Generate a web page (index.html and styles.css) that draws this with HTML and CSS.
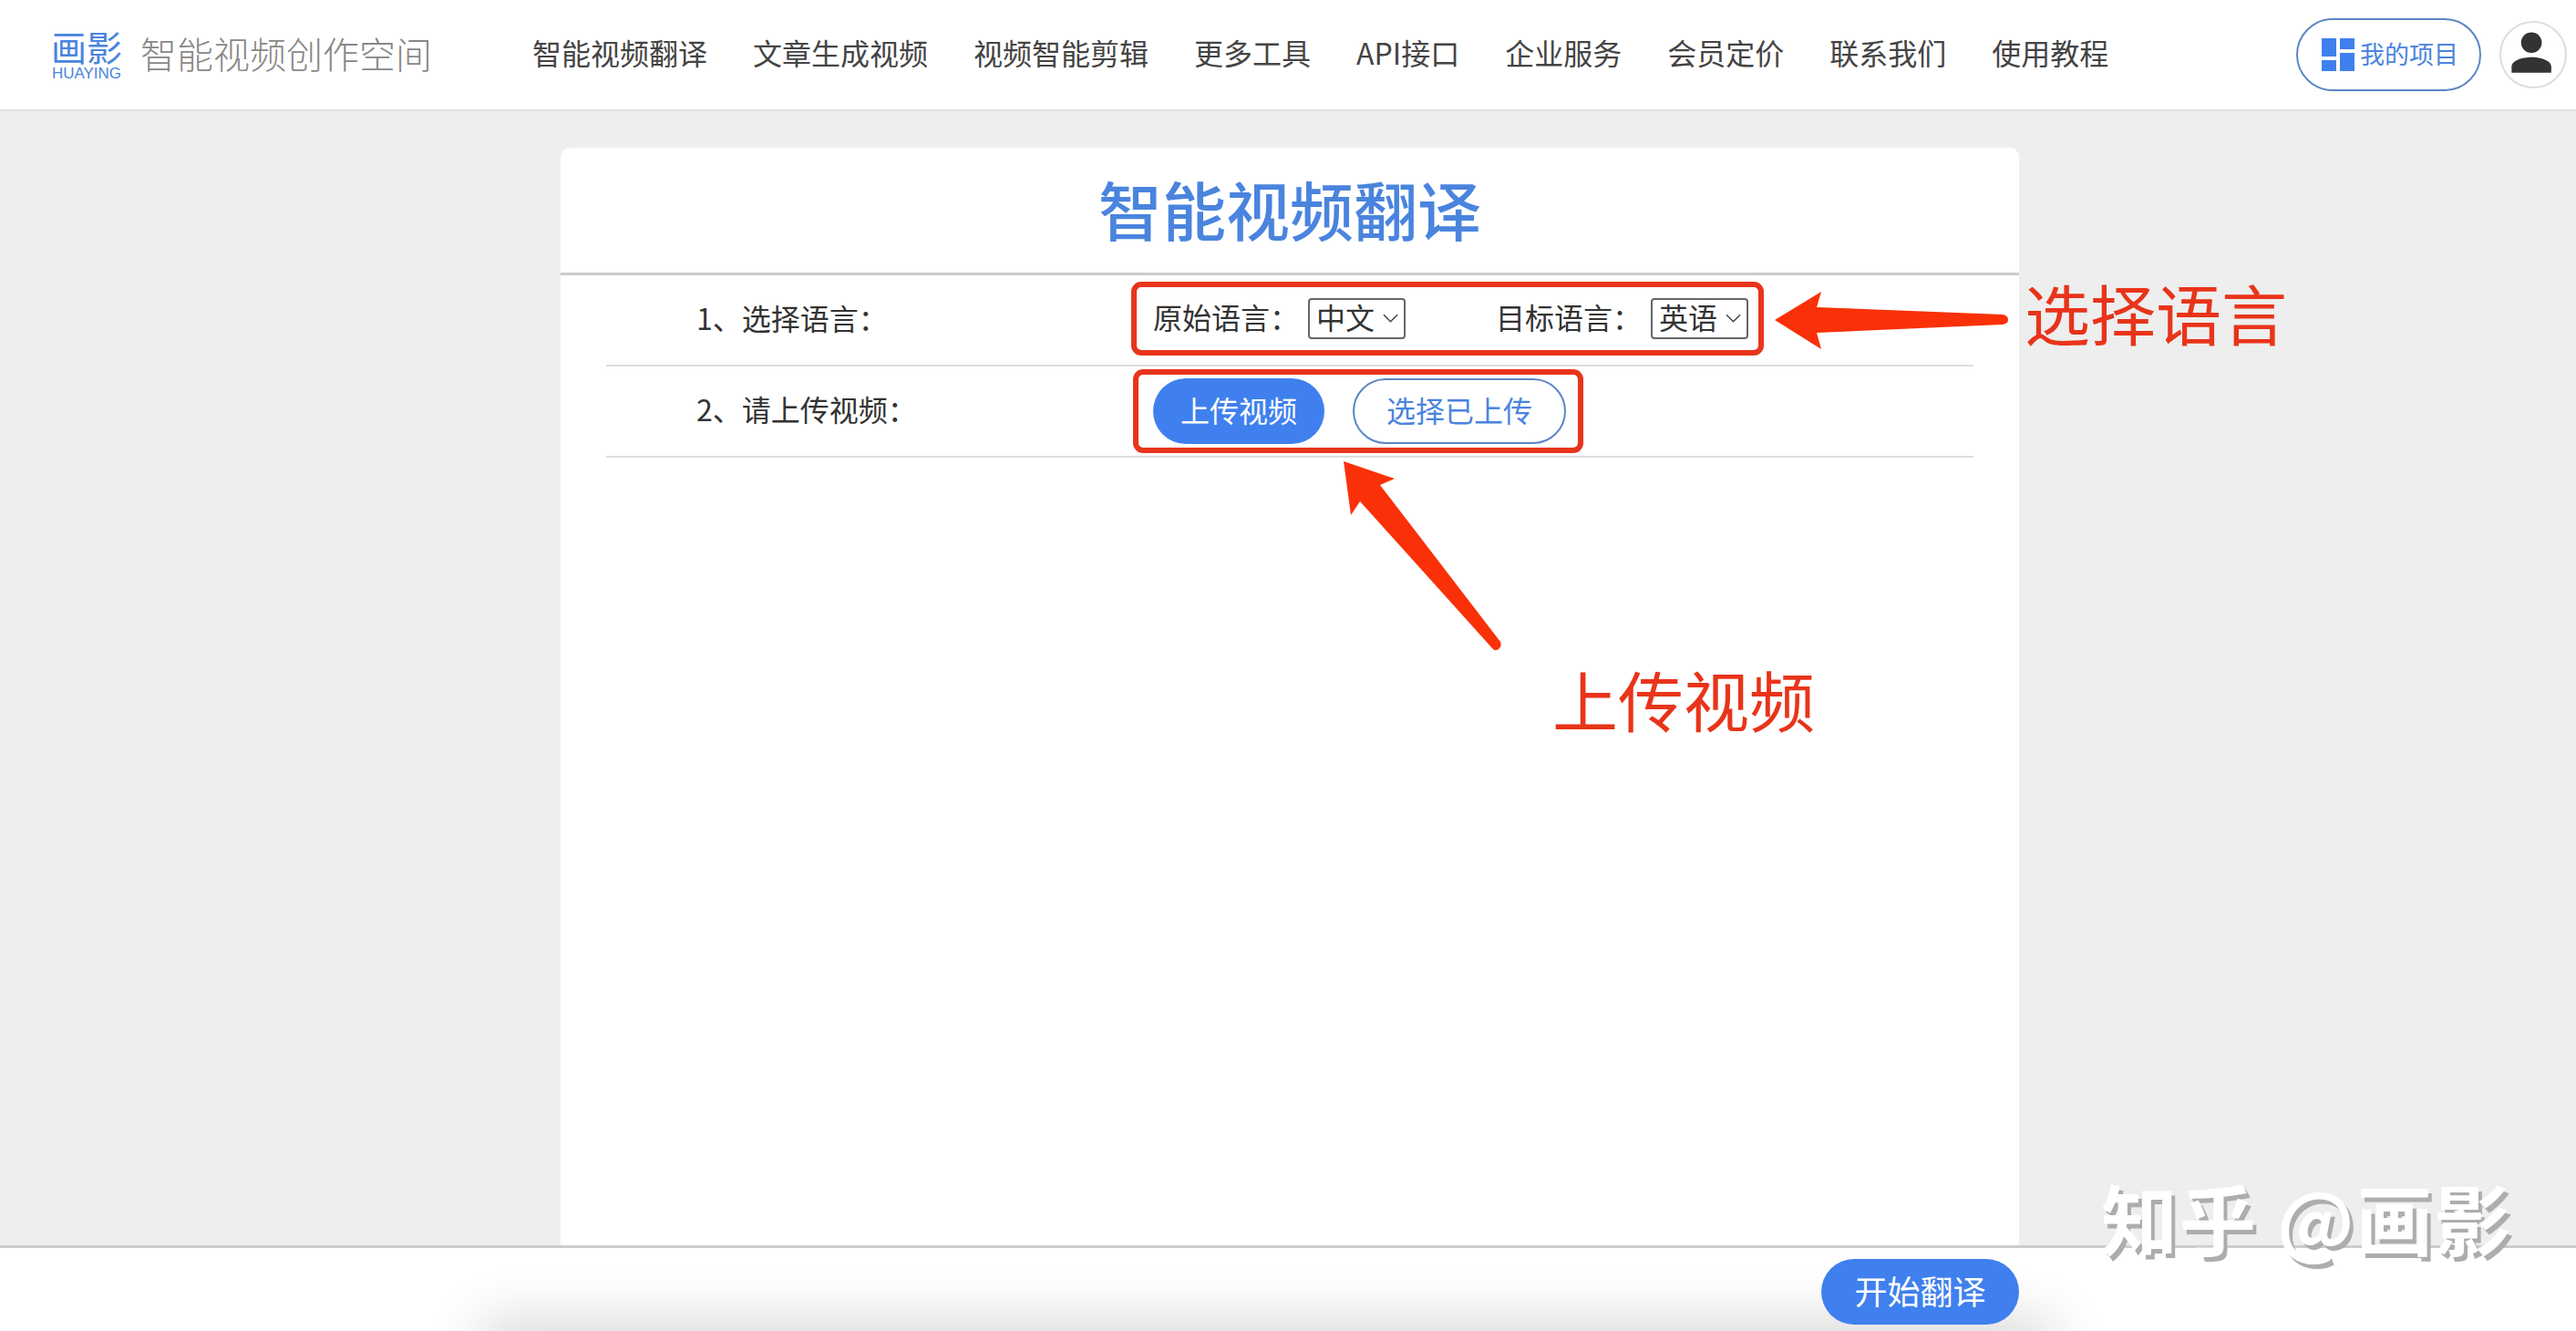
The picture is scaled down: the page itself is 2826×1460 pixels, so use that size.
FILE: index.html
```html
<!DOCTYPE html>
<html lang="zh-CN">

<head>
    <meta charset="UTF-8">
    <meta name="viewport" content="width=device-width, initial-scale=1.0">
    <title>智能视频翻译</title>
    <link rel="stylesheet" href="styles.css">
</head>

<body>
    <header class="navbar">
        <a class="logo" href="#">
            <span class="logo-name">画影</span>
            <span class="logo-en">HUAYING</span>
        </a>
        <span class="site-title">智能视频创作空间</span>
        <nav class="nav-links">
            <a href="#">智能视频翻译</a>
            <a href="#">文章生成视频</a>
            <a href="#">视频智能剪辑</a>
            <a href="#">更多工具</a>
            <a href="#">API接口</a>
            <a href="#">企业服务</a>
            <a href="#">会员定价</a>
            <a href="#">联系我们</a>
            <a href="#">使用教程</a>
        </nav>
        <div class="nav-right">
            <a class="project-btn" href="#">
                <svg class="project-icon" viewBox="0 0 36 36">
                    <rect x="0" y="0" width="16" height="20"></rect>
                    <rect x="0" y="24" width="16" height="12"></rect>
                    <rect x="20" y="0" width="16" height="12"></rect>
                    <rect x="20" y="16" width="16" height="20"></rect>
                </svg>
                <span class="project-text">我的项目</span>
            </a>
            <a class="avatar" href="#">
                <svg viewBox="0 0 74 74" width="70" height="70">
                    <circle cx="35" cy="23" r="12"></circle>
                    <path d="M12 58 V51 C12 44 24 40 35 40 C46 40 58 44 58 51 V58 Z"></path>
                </svg>
            </a>
        </div>
    </header>

    <main class="page">
        <section class="card">
            <h1 class="card-title">智能视频翻译</h1>
            <div class="form-row">
                <span class="row-label">1、选择语言：</span>
                <div class="row-controls lang-controls">
                    <span class="lang-label">原始语言：</span>
                    <div class="select-box">
                        <span class="select-value">中文</span>
                        <svg class="chevron" viewBox="0 0 18 10"><path d="M1 1 L9 9 L17 1"></path></svg>
                    </div>
                    <span class="lang-label lang-target">目标语言：</span>
                    <div class="select-box">
                        <span class="select-value">英语</span>
                        <svg class="chevron" viewBox="0 0 18 10"><path d="M1 1 L9 9 L17 1"></path></svg>
                    </div>
                </div>
            </div>
            <div class="form-row">
                <span class="row-label">2、请上传视频：</span>
                <div class="row-controls btn-group">
                    <button type="button" class="btn btn-primary">上传视频</button>
                    <button type="button" class="btn btn-outline">选择已上传</button>
                </div>
            </div>
        </section>
    </main>

    <footer class="footer">
        <button type="button" class="btn btn-primary btn-start">开始翻译</button>
    </footer>

    <!-- red marks drawn on top of the screenshot -->
    <div class="mark-box mark-lang"></div>
    <div class="mark-box mark-upload"></div>
    <svg class="mark-arrows" viewBox="0 0 2826 1460">
        <path d="M1947 351 L1998 320 L1993 337 L2197 345 Q2203 346 2203 351 Q2203 355 2197 356 L1993 365 L1998 383 Z"></path>
        <path d="M1474 506 L1530 525 L1514 532 L1646 704 Q1648 709 1644 712 Q1640 715 1637 711 L1492 550 L1482 565 Z"></path>
    </svg>
    <span class="mark-text mark-text-lang">选择语言</span>
    <span class="mark-text mark-text-upload">上传视频</span>
    <span class="watermark">知乎 @画影</span>
</body>

</html>
```

FILE: styles.css
```css
:root {
    --blue: #3f80ee;
    --blue-text: #4a84de;
    --blue-line: #5a86c4;
    --red: #e8341a;
}

* {
    margin: 0;
    padding: 0;
    box-sizing: border-box;
}

a {
    color: inherit;
    text-decoration: none;
}

body {
    position: relative;
    display: flex;
    flex-direction: column;
    height: 1460px;
    overflow: hidden;
    font-family: "Noto Sans CJK SC", "Liberation Sans", sans-serif;
    color: #333;
    background-color: #eee;
}

.navbar {
    display: flex;
    align-items: center;
    flex-shrink: 0;
    height: 122px;
    padding: 0 10px 0 56px;
    background-color: #fff;
    border-bottom: 2px solid #e2e2e2;
}

.logo {
    display: flex;
    flex-direction: column;
    align-items: center;
    flex-shrink: 0;
    width: 78px;
    padding-bottom: 2px;
    white-space: nowrap;
    color: var(--blue-text);
}

.logo-name {
    font-size: 39px;
    line-height: 44px;
}

.logo-en {
    font-family: "Liberation Sans", sans-serif;
    font-size: 17px;
    line-height: 18px;
}

.site-title {
    margin-left: 20px;
    padding-bottom: 4px;
    font-size: 40px;
    font-weight: 300;
    color: #888;
}

.nav-links {
    display: flex;
    gap: 50px;
    margin-left: 110px;
    padding-bottom: 6px;
    font-size: 32px;
    color: #444;
}

.nav-right {
    display: flex;
    align-items: center;
    gap: 20px;
    margin-left: auto;
}

.project-btn {
    display: flex;
    align-items: center;
    gap: 6px;
    height: 80px;
    padding: 0 23px 0 26px;
    font-size: 27px;
    color: var(--blue-text);
    border: 2px solid var(--blue-line);
    border-radius: 40px;
}

.project-text {
    padding-bottom: 4px;
}

.project-icon {
    width: 36px;
    height: 36px;
    fill: var(--blue);
}

.avatar {
    display: flex;
    width: 74px;
    height: 74px;
    border: 2px solid #ddd;
    border-radius: 50%;
    fill: #333;
}

.page {
    display: flex;
    flex: 1;
    justify-content: center;
    min-height: 0;
    padding: 40px 0 0 4px;
}

.card {
    width: 1600px;
    background-color: #fff;
    border-radius: 10px 10px 0 0;
}

.card-title {
    height: 140px;
    font-size: 70px;
    font-weight: 500;
    line-height: 134px;
    text-align: center;
    color: var(--blue-text);
    border-bottom: 3px solid #ccc;
}

.form-row {
    display: grid;
    grid-template-columns: 501px 1fr;
    align-items: center;
    height: 100px;
    margin: 0 50px;
    padding-left: 99px;
    font-size: 32px;
    border-bottom: 2px solid #ddd;
}

.row-label {
    padding-bottom: 6px;
}

.lang-label {
    padding-bottom: 4px;
}

.row-controls {
    display: flex;
    align-items: center;
}

.lang-controls {
    margin-bottom: 4px;
}

.lang-target {
    margin-left: 99px;
}

.select-box {
    display: flex;
    align-items: center;
    justify-content: space-between;
    width: 107px;
    height: 45px;
    margin-left: 10px;
    padding: 0 6px 0 7px;
    background-color: #fff;
    border: 2px solid #666;
    border-radius: 4px;
}

.select-value {
    padding-bottom: 3px;
    line-height: 37px;
}

.chevron {
    width: 17px;
    height: 10px;
    fill: none;
    stroke: #444;
    stroke-width: 1.6;
}

.btn {
    height: 72px;
    padding-bottom: 5px;
    font-family: inherit;
    font-size: 32px;
    border-radius: 36px;
    cursor: pointer;
}

.btn-group {
    gap: 31px;
}

.btn-primary {
    width: 188px;
    color: #fff;
    background-color: var(--blue);
    border: none;
}

.btn-outline {
    width: 234px;
    color: var(--blue-text);
    background-color: #fff;
    border: 2px solid var(--blue-line);
}

.footer {
    position: relative;
    display: flex;
    flex-shrink: 0;
    justify-content: flex-end;
    height: 94px;
    padding: 12px 611px 0 0;
    overflow: hidden;
    background-color: #fff;
    border-top: 3px solid #ccc;
}

.footer::after {
    content: "";
    position: absolute;
    top: 100%;
    left: 540px;
    width: 1700px;
    height: 40px;
    box-shadow: 0 0 60px 12px rgba(0, 0, 0, 0.16);
}

.btn-start {
    position: relative;
    z-index: 1;
    width: 217px;
    font-size: 36px;
}

.mark-box {
    position: absolute;
    border: 6px solid var(--red);
    border-radius: 11px;
}

.mark-lang {
    top: 309px;
    left: 1241px;
    width: 694px;
    height: 81px;
}

.mark-upload {
    top: 405px;
    left: 1243px;
    width: 494px;
    height: 92px;
}

.mark-arrows {
    position: absolute;
    top: 0;
    left: 0;
    width: 2826px;
    height: 1460px;
    fill: #fa3008;
    pointer-events: none;
}

.mark-text {
    position: absolute;
    font-size: 72px;
    font-weight: 400;
    line-height: 80px;
    color: var(--red);
}

.mark-text-lang {
    top: 302px;
    left: 2221px;
}

.mark-text-upload {
    top: 726px;
    left: 1703px;
}

.watermark {
    position: absolute;
    top: 1285px;
    left: 2305px;
    font-size: 84px;
    font-weight: 700;
    line-height: 100px;
    letter-spacing: 2px;
    white-space: nowrap;
    color: #fff;
    text-shadow: 4px 5px 0 #adadad;
}
```
